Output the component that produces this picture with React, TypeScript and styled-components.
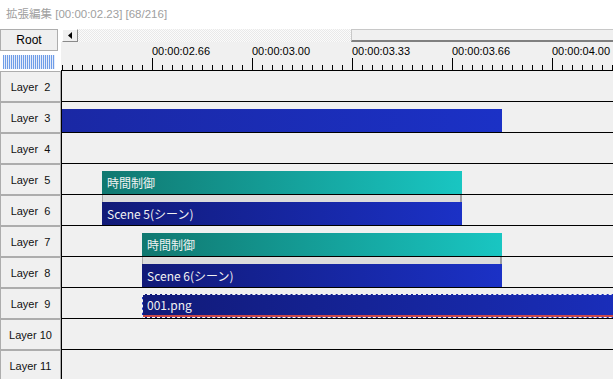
import React from 'react';
import styled, { createGlobalStyle, css } from 'styled-components';

type ClipKind = 'blue' | 'teal';

interface ClipData {
	start: number;
	width: number;
	kind: ClipKind;
	label?: string;
	fade?: string;
	selected?: boolean;
	band?: boolean;
}

interface LayerData {
	n: number;
	clip?: ClipData;
}

const layers: LayerData[] = [
	{ n: 2 },
	{ n: 3, clip: { start: 0, width: 440, kind: 'blue', fade: '#1a28a4' } },
	{ n: 4 },
	{ n: 5, clip: { start: 40, width: 360, kind: 'teal', label: '時間制御' } },
	{ n: 6, clip: { start: 40, width: 360, kind: 'blue', label: 'Scene 5(シーン)', band: true } },
	{ n: 7, clip: { start: 80, width: 360, kind: 'teal', label: '時間制御' } },
	{ n: 8, clip: { start: 80, width: 360, kind: 'blue', label: 'Scene 6(シーン)', band: true } },
	{ n: 9, clip: { start: 80, width: 560, kind: 'blue', label: '001.png', selected: true } },
	{ n: 10 },
	{ n: 11 },
];

const rulerLabels = ['00:00:02.66', '00:00:03.00', '00:00:03.33', '00:00:03.66', '00:00:04.00'];

// layer numbers are padded like %2d
const layerName = (n: number) => (n < 10 ? `Layer  ${n}` : `Layer ${n}`);

export default function App() {
	const ticks = Array.from({ length: 56 }, (_, i) => i);

	return (
		<>
			<GlobalStyle />
			<Window>
				<TitleBar>拡張編集 [00:00:02.23] [68/216]</TitleBar>
				<Body>
					<Side>
						<RootButton>Root</RootButton>
						<Hatch />
						{layers.map(layer => (
							<LayerButton key={layer.n}>{layerName(layer.n)}</LayerButton>
						))}
					</Side>

					<Main>
						<TopBar>
							<ScrollLeft>
								<svg width='4' height='7' viewBox='0 0 4 7'>
									<path d='M4 0 L0 3.5 L4 7 Z' fill='#000' />
								</svg>
							</ScrollLeft>
							<Dither />
							<Thumb />
						</TopBar>

						<Ruler>
							<Labels>
								{rulerLabels.map(t => (
									<TimeLabel key={t}>{t}</TimeLabel>
								))}
							</Labels>
							<svg width='552' height='12' style={{ display: 'block' }}>
								{ticks.map(i => {
									const x = 1.5 + i * 10;
									const major = i % 10 === 9;
									return <line key={i} x1={x} x2={x} y1={major ? 0 : 7} y2={12} stroke='#000' strokeWidth='1' />;
								})}
							</svg>
						</Ruler>

						{layers.map(layer => (
							<Row key={layer.n}>
								<Band $start={layer.clip?.start ?? 0} $width={layer.clip?.width ?? 0} $show={!!layer.clip?.band} />
								{layer.clip && (
									<Clip
										$start={layer.clip.start}
										$width={layer.clip.width}
										$kind={layer.clip.kind}
										$fade={layer.clip.fade}
										$selected={!!layer.clip.selected}
									>
										{layer.clip.label}
									</Clip>
								)}
							</Row>
						))}
					</Main>
				</Body>
			</Window>
		</>
	);
}

const GlobalStyle = createGlobalStyle`
	html, body {
		margin: 0;
		padding: 0;
		background: #fff;
	}
	body {
		font-family: "Liberation Sans", "Noto Sans CJK JP", sans-serif;
	}
`;

const Window = styled.div`
	width: 613px;
	height: 379px;
	overflow: hidden;
	background: #fff;
`;

const TitleBar = styled.div`
	height: 29px;
	line-height: 28px;
	padding-left: 6px;
	font-size: 11.5px;
	color: #a0a0a0;
	white-space: nowrap;
`;

const Body = styled.div`
	display: flex;
`;

const Side = styled.div`
	width: 61px;
	flex: 0 0 61px;
	display: flex;
	flex-direction: column;
	background: #fff;
`;

const RootButton = styled.div`
	width: 58px;
	height: 22px;
	box-sizing: border-box;
	border: 1px solid #adadad;
	background: #efefef;
	font-size: 12px;
	line-height: 20px;
	text-align: center;
	color: #000;
`;

const Hatch = styled.div`
	width: 52px;
	height: 14px;
	margin: 4px 0 2px 3px;
	background: repeating-linear-gradient(90deg, #6f9de8 0 1px, #e4ecfa 1px 2px);
`;

const LayerButton = styled.div`
	width: 61px;
	height: 31px;
	flex: 0 0 31px;
	box-sizing: border-box;
	border: 1px solid #adadad;
	background: #f0f0f0;
	padding-top: 2px;
	font-size: 11px;
	line-height: 27px;
	text-align: center;
	white-space: pre;
	color: #101010;
`;

const Main = styled.div`
	flex: 1;
	min-width: 0;
	overflow: hidden;
	background: #f0f0f0;
`;

const TopBar = styled.div`
	height: 13px;
	display: flex;
	background: #fff;
`;

const ScrollLeft = styled.div`
	width: 16px;
	height: 13px;
	margin-left: 1px;
	box-sizing: border-box;
	border: 1px solid;
	border-color: #fff #8a8a8a #8a8a8a #fff;
	background: #f0f0f0;
	display: flex;
	align-items: center;
	justify-content: center;
`;

const Dither = styled.div`
	flex: 0 0 273px;
	background: repeating-conic-gradient(#e9e9e9 0 25%, #fbfbfb 0 50%) 0 0 / 2px 2px;
`;

const Thumb = styled.div`
	flex: 1;
	box-sizing: border-box;
	border: 1px solid #c8c8c8;
	border-bottom: 2px solid #808080;
	border-right: none;
	background: #f0f0f0;
`;

const Ruler = styled.div`
	height: 29px;
	box-sizing: border-box;
	border-bottom: 1px solid #000;
	background: #f0f0f0;
`;

const Labels = styled.div`
	height: 16px;
	display: flex;
	padding-left: 91px;
	white-space: nowrap;
`;

const TimeLabel = styled.div`
	flex: 0 0 100px;
	font-size: 11px;
	line-height: 18px;
	color: #000;
`;

const Row = styled.div`
	height: 31px;
	box-sizing: border-box;
	border-left: 1px solid #000;
	border-bottom: 1px solid #000;
	display: flex;
	flex-direction: column;
`;

const Band = styled.div<{ $start: number; $width: number; $show: boolean }>`
	height: 7px;
	flex: 0 0 7px;
	margin-left: ${p => p.$start}px;
	width: ${p => p.$width}px;
	box-sizing: border-box;
	${p =>
		p.$show &&
		css`
			background: #dcdcdc;
			border-left: 1px solid #a8a8a8;
			border-right: 2px solid #a0a0a0;
		`}
`;

const gradients: Record<ClipKind, [string, string]> = {
	blue: ['#111a78', '#1b31c6'],
	teal: ['#107870', '#19c6c2'],
};

const Clip = styled.div<{ $start: number; $width: number; $kind: ClipKind; $fade?: string; $selected: boolean }>`
	height: 23px;
	flex: 0 0 23px;
	box-sizing: border-box;
	margin-left: ${p => p.$start}px;
	width: ${p => p.$width}px;
	padding-left: 5px;
	background: linear-gradient(90deg, ${p => p.$fade ?? gradients[p.$kind][0]}, ${p => gradients[p.$kind][1]});
	font-family: "Noto Sans CJK JP", sans-serif;
	font-size: 12px;
	line-height: 23px;
	color: #f2f2f2;
	white-space: nowrap;
	overflow: hidden;
	${p =>
		p.$selected &&
		css`
			margin-top: -1px;
			height: 24px;
			flex-basis: 24px;
			line-height: 20px;
			padding-left: 4px;
			border-top: 1px dashed #f4f4f4;
			border-left: 1px dashed #f4f4f4;
			border-bottom: 1px dashed #ffffff;
			background:
				linear-gradient(#c94848, #c94848) bottom / 100% 2px no-repeat,
				linear-gradient(90deg, ${gradients.blue[0]}, ${gradients.blue[1]});
		`}
`;
